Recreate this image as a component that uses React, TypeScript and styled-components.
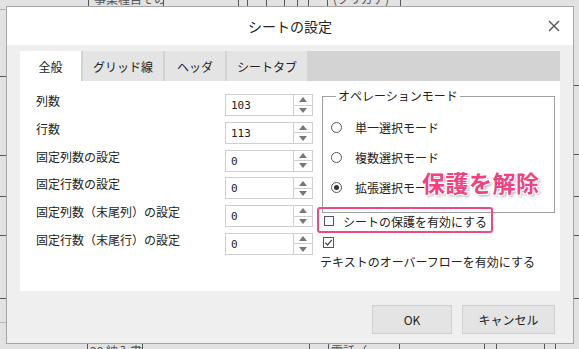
import React from 'react';
import styled, {createGlobalStyle} from 'styled-components';

const GlobalStyle = createGlobalStyle`
    html, body {
        margin: 0;
        padding: 0;
    }
    body {
        font-family: "Noto Sans CJK JP", "Noto Sans", sans-serif;
        color: #222;
        background: #e2e2e2;
    }
`;

const Page = styled.div`
    width: 579px;
    height: 349px;
    display: grid;
    grid-template-columns: 6px 568px 5px;
    grid-template-rows: 6px 338px 5px;
    overflow: hidden;
    background: #e2e2e2;
`;

// spreadsheet peeking out around the dialog
const HStrip = styled.div<{$bottom?: boolean}>`
    grid-column: 1 / -1;
    display: flex;
    overflow: hidden;
`;

const SheetCell = styled.div<{$w: number; $dashed?: boolean}>`
    flex: 0 0 ${p => p.$w}px;
    box-sizing: border-box;
    border-right: 1px ${p => p.$dashed ? 'dashed' : 'solid'} #555;
    overflow: hidden;
    white-space: nowrap;
    font-size: 12px;
    line-height: 12px;
    color: #555;
`;

const TopCellText = styled.div<{$center?: boolean}>`
    margin-top: -7px;
    padding-left: 5px;
    text-align: ${p => p.$center ? 'center' : 'left'};
`;

const BottomCellText = styled.div`
    margin-top: 1px;
    padding-left: 2px;
`;

const VStrip = styled.div`
    display: flex;
    flex-direction: column;
    overflow: hidden;
`;

const Segment = styled.div<{$h: number; $light?: boolean}>`
    flex: 0 0 ${p => p.$h}px;
    box-sizing: border-box;
    border-bottom: 1px solid ${p => p.$light ? '#bbb' : '#555'};
    font-size: 8px;
    line-height: 8px;
    color: #555;
    overflow: hidden;
`;

// dialog
const Dialog = styled.div`
    grid-row: 2;
    grid-column: 2;
    box-sizing: border-box;
    border: 1px solid #a6a6a6;
    background: #efefef;
    display: flex;
    flex-direction: column;
`;

const Header = styled.div`
    height: 38px;
    background: #fff;
    display: grid;
    grid-template-columns: 1fr auto 1fr;
    align-items: center;
`;

const Title = styled.div`
    grid-column: 2;
    font-size: 14px;
    color: #222;
`;

const Close = styled.div`
    grid-column: 3;
    justify-self: end;
    margin-right: 13px;
    display: flex;
`;

const Body = styled.div`
    flex: 1;
    padding: 6px 13px 0;
    display: flex;
    flex-direction: column;
`;

const TabBar = styled.div`
    height: 30px;
    background: #d3d3d3;
    display: flex;
    gap: 2px;
`;

const Tab = styled.div<{$w: number; $active?: boolean}>`
    width: ${p => p.$w}px;
    background: ${p => p.$active ? '#fff' : '#e4e4e4'};
    display: flex;
    align-items: center;
    justify-content: center;
    font-size: 12px;
    color: #222;
`;

const Panel = styled.div`
    position: relative;
    height: 210px;
    background: #fff;
    display: flex;
    padding-left: 16px;
`;

const LeftCol = styled.div`
    margin-top: 13px;
    width: 277px;
    display: flex;
    flex-direction: column;
    gap: 5.8px;
`;

const Row = styled.div`
    display: flex;
    align-items: flex-start;
    height: 22px;
`;

const Label = styled.div`
    width: 189px;
    font-size: 12px;
    line-height: 14px;
    color: #222;
`;

const Spinner = styled.div`
    width: 88px;
    height: 22px;
    box-sizing: border-box;
    border: 1px solid #cfcfcf;
    display: flex;
`;

const SpinValue = styled.div`
    flex: 1;
    padding: 3px 0 0 5px;
    font-family: "DejaVu Sans Mono", "Liberation Mono", monospace;
    font-size: 11px;
    line-height: 16px;
    color: #222;
`;

const SpinButtons = styled.div`
    width: 18px;
    border-left: 1px solid #cfcfcf;
    display: flex;
    flex-direction: column;
`;

const SpinHalf = styled.div<{$top?: boolean}>`
    flex: 1;
    display: flex;
    align-items: center;
    justify-content: center;
    border-bottom: ${p => p.$top ? '1px solid #cfcfcf' : 'none'};
`;

const Arrow = styled.div<{$up?: boolean}>`
    width: 0;
    height: 0;
    border-left: 4px solid transparent;
    border-right: 4px solid transparent;
    ${p => p.$up ? 'border-bottom: 5px solid #777;' : 'border-top: 5px solid #777;'}
`;

const RightCol = styled.div`
    margin: 8px 0 0 7px;
    width: 235px;
    display: flex;
    flex-direction: column;
`;

const FieldSet = styled.fieldset`
    margin: 0 0 0 2px;
    padding: 9px 0 10px 8px;
    width: 233px;
    box-sizing: border-box;
    border: 1px solid #a0a0a0;
    min-width: 0;
`;

const Legend = styled.legend`
    margin-left: 5px;
    padding: 0 2px;
    font-size: 12px;
    line-height: 14px;
    color: #222;
`;

const RadioRow = styled.div`
    height: 30px;
    display: flex;
    align-items: center;
    font-size: 12px;
    color: #222;
`;

const Radio = styled.div<{$checked?: boolean}>`
    width: 11px;
    height: 11px;
    box-sizing: border-box;
    border: 1px solid #555;
    border-radius: 50%;
    margin-right: 13px;
    display: flex;
    align-items: center;
    justify-content: center;
    &::after {
        content: '';
        display: ${p => p.$checked ? 'block' : 'none'};
        width: 5px;
        height: 5px;
        border-radius: 50%;
        background: #333;
    }
`;

const CheckRow = styled.div`
    height: 16px;
    display: flex;
    align-items: center;
    padding-left: 4px;
    font-size: 12px;
    color: #222;
`;

const Box = styled.div<{$size: number}>`
    width: ${p => p.$size}px;
    height: ${p => p.$size}px;
    box-sizing: border-box;
    border: 1px solid #555;
    margin-right: 9px;
    display: flex;
    align-items: center;
    justify-content: center;
`;

const CheckedBox = styled.div`
    margin: 8px 0 0 3px;
    display: flex;
`;

const WrapText = styled.div`
    margin-top: 7px;
    font-size: 12px;
    line-height: 14px;
    color: #222;
    white-space: nowrap;
`;

// annotation drawn on top of the screenshot
const Callout = styled.div`
    position: absolute;
    left: 402px;
    top: 90px;
    font-size: 23px;
    line-height: 1;
    font-weight: 700;
    letter-spacing: 0.5px;
    color: #f2417f;
    white-space: nowrap;
    text-shadow: 1px 1px 0 #fff, -1px -1px 0 #fff, 1px -1px 0 #fff, -1px 1px 0 #fff,
        0 1px 0 #fff, 0 -1px 0 #fff, 2px 2px 3px rgba(0, 0, 0, 0.35);
`;

const Highlight = styled.div`
    position: absolute;
    left: 297px;
    top: 126px;
    width: 176px;
    height: 26px;
    box-sizing: border-box;
    border: 2px solid #ef4a80;
    border-radius: 3px;
`;

const Footer = styled.div`
    display: flex;
    justify-content: flex-end;
    gap: 10px;
    padding: 14px 5px 0 0;
`;

const Button = styled.div<{$w: number}>`
    width: ${p => p.$w}px;
    height: 29px;
    box-sizing: border-box;
    background: #e4e4e4;
    border: 1px solid #cfcfcf;
    display: flex;
    align-items: center;
    justify-content: center;
    font-size: 12px;
    color: #222;
`;

const numberFields = [
    {label: '列数', value: '103'},
    {label: '行数', value: '113'},
    {label: '固定列数の設定', value: '0'},
    {label: '固定行数の設定', value: '0'},
    {label: '固定列数（末尾列）の設定', value: '0'},
    {label: '固定行数（末尾行）の設定', value: '0'},
];

const tabs = [
    {label: '全般', w: 61, active: true},
    {label: 'グリッド線', w: 80},
    {label: 'ヘッダ', w: 60},
    {label: 'シートタブ', w: 80},
];

const modes = [
    {label: '単一選択モード'},
    {label: '複数選択モード'},
    {label: '拡張選択モード', checked: true},
];

const SpinInput = ({value}: {value: string}) => <Spinner>
    <SpinValue>{value}</SpinValue>
    <SpinButtons>
        <SpinHalf $top><Arrow $up/></SpinHalf>
        <SpinHalf><Arrow/></SpinHalf>
    </SpinButtons>
</Spinner>;

export default function App() {
    return <>
        <GlobalStyle/>
        <Page>
            <HStrip>
                <SheetCell $w={89}/>
                <SheetCell $w={75}><TopCellText $center>事業種目その</TopCellText></SheetCell>
                <SheetCell $w={75}/>
                <SheetCell $w={9}/>
                <SheetCell $w={19} $dashed/>
                <SheetCell $w={18}/>
                <SheetCell $w={13}/>
                <SheetCell $w={11}/>
                <SheetCell $w={19}/>
                <SheetCell $w={73}><TopCellText>(フリガナ)</TopCellText></SheetCell>
            </HStrip>
            <VStrip>
                <Segment $h={71}>…</Segment>
                <Segment $h={79}/>
                <Segment $h={41}/>
                <Segment $h={39}/>
                <Segment $h={63}/>
                <Segment $h={24} $light/>
            </VStrip>
            <Dialog>
                <Header>
                    <Title>シートの設定</Title>
                    <Close>
                        <svg width="12" height="12" viewBox="0 0 12 12">
                            <path d="M1 1L11 11M11 1L1 11" stroke="#555" strokeWidth="1.4"/>
                        </svg>
                    </Close>
                </Header>
                <Body>
                    <TabBar>
                        {tabs.map(t => <Tab key={t.label} $w={t.w} $active={t.active}>{t.label}</Tab>)}
                    </TabBar>
                    <Panel>
                        <LeftCol>
                            {numberFields.map(f => <Row key={f.label}>
                                <Label>{f.label}</Label>
                                <SpinInput value={f.value}/>
                            </Row>)}
                        </LeftCol>
                        <RightCol>
                            <FieldSet>
                                <Legend>オペレーションモード</Legend>
                                {modes.map(m => <RadioRow key={m.label}>
                                    <Radio $checked={m.checked}/>
                                    {m.label}
                                </RadioRow>)}
                            </FieldSet>
                            <CheckRow>
                                <Box $size={10}/>
                                シートの保護を有効にする
                            </CheckRow>
                            <CheckedBox>
                                <Box $size={11}>
                                    <svg width="9" height="9" viewBox="0 0 9 9">
                                        <path d="M1.2 4.6L3.5 7L7.8 1.8" fill="none" stroke="#444" strokeWidth="1.2"/>
                                    </svg>
                                </Box>
                            </CheckedBox>
                            <WrapText>テキストのオーバーフローを有効にする</WrapText>
                        </RightCol>
                        <Highlight/>
                        <Callout>保護を解除</Callout>
                    </Panel>
                    <Footer>
                        <Button $w={80}>OK</Button>
                        <Button $w={93}>キャンセル</Button>
                    </Footer>
                </Body>
            </Dialog>
            <VStrip>
                <Segment $h={80}/>
                <Segment $h={69}/>
                <Segment $h={42}/>
                <Segment $h={39}/>
                <Segment $h={63}/>
            </VStrip>
            <HStrip $bottom>
                <SheetCell $w={88}/>
                <SheetCell $w={55}><BottomCellText>20 納入書</BottomCellText></SheetCell>
                <SheetCell $w={167}/>
                <SheetCell $w={19}/>
                <SheetCell $w={71}><BottomCellText>電話（</BottomCellText></SheetCell>
                <SheetCell $w={85}/>
                <SheetCell $w={12}/>
                <SheetCell $w={48}/>
                <SheetCell $w={11}/>
            </HStrip>
        </Page>
    </>;
}
